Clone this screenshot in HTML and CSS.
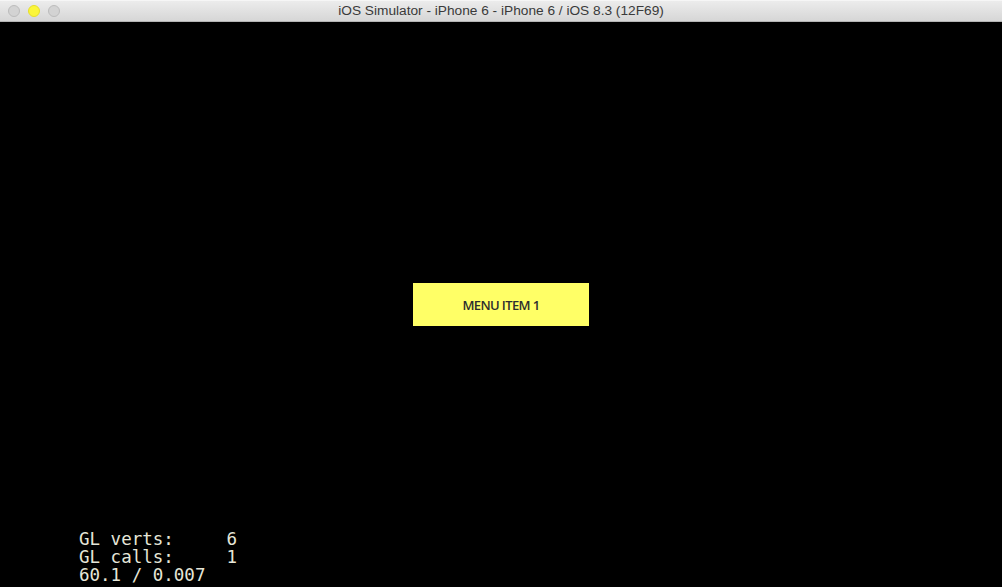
FILE: index.html
```html
<!DOCTYPE html>
<html>
<head>
<meta charset="utf-8">
<link rel="stylesheet" href="styles.css">
</head>
<body>
<div class="window">
  <div class="titlebar">
    <div class="lights">
      <span class="light gray"></span>
      <span class="light yellow"></span>
      <span class="light gray"></span>
    </div>
    <div class="title">iOS Simulator - iPhone 6 - iPhone 6 / iOS 8.3 (12F69)</div>
  </div>
  <div class="screen">
    <div class="center">
      <div class="menu-item">MENU ITEM 1</div>
    </div>
    <div class="stats">
      <div class="stat">GL verts:     6</div>
      <div class="stat">GL calls:     1</div>
      <div class="stat">60.1 / 0.007</div>
    </div>
  </div>
</div>
</body>
</html>
```
FILE: styles.css
```css
html, body {
  margin: 0;
  padding: 0;
  background: #000;
}
.window {
  width: 1002px;
  height: 587px;
  display: flex;
  flex-direction: column;
  overflow: hidden;
}
.titlebar {
  height: 22px;
  flex: none;
  box-sizing: border-box;
  background: linear-gradient(#ececec, #d6d6d6);
  border-top: 1px solid #f6f6f6;
  border-bottom: 1px solid #b4b4b4;
  position: relative;
  display: flex;
  align-items: center;
  justify-content: center;
}
.lights {
  position: absolute;
  left: 8px;
  top: 4px;
  display: flex;
  gap: 8px;
}
.light {
  width: 12px;
  height: 12px;
  border-radius: 50%;
  box-sizing: border-box;
}
.light.gray {
  background: #d3d3d3;
  border: 1px solid #bcbcbc;
}
.light.yellow {
  background: #fbf63a;
  border: 1px solid #e6df2a;
}
.title {
  font-family: "Liberation Sans", Arial, sans-serif;
  font-size: 13.7px;
  color: #3a3a3a;
  line-height: 20px;
}
.screen {
  flex: 1;
  background: #000;
  display: flex;
  flex-direction: column;
}
.center {
  flex: 1;
  display: flex;
  justify-content: center;
  padding-top: 261px;
}
.menu-item {
  width: 176px;
  height: 43px;
  background: #ffff66;
  color: #2e2e2e;
  font-family: "Open Sans", "Liberation Sans", sans-serif;
  font-size: 13px;
  font-weight: 600;
  letter-spacing: -0.6px;
  display: flex;
  align-items: center;
  justify-content: center;
}
.stats {
  font-family: "DejaVu Sans Mono", monospace;
  font-size: 17.5px;
  line-height: 18px;
  color: #e6e6d8;
  padding-left: 79px;
  padding-bottom: 3px;
}
.stat {
  white-space: pre;
}
```
